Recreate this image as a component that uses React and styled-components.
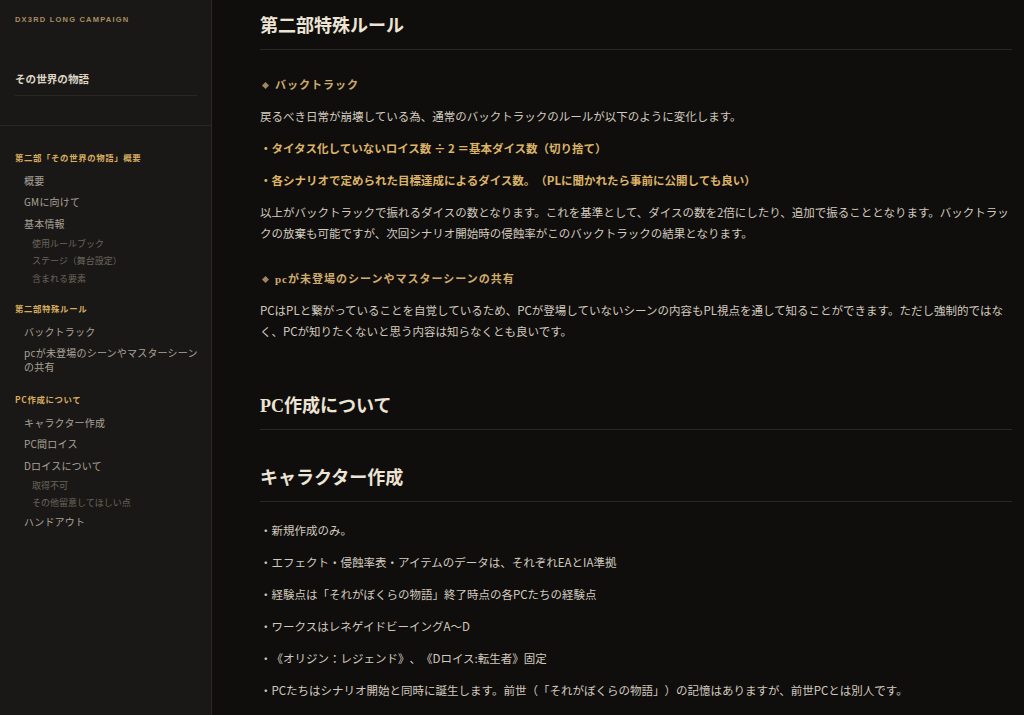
import React from 'react';
import styled, { createGlobalStyle } from 'styled-components';

const GlobalStyle = createGlobalStyle`
  html, body {
    margin: 0;
    padding: 0;
    background: #100e0d;
  }
  body {
    font-family: "Noto Sans CJK JP", "Noto Sans", sans-serif;
    text-spacing-trim: space-all;
  }
`;

const Page = styled.div`
  display: grid;
  grid-template-columns: 212px 1fr;
  height: 100vh;
  overflow: hidden;
  background: #100e0d;
`;

const Sidebar = styled.aside`
  background: #1a1816;
  border-right: 1px solid #2b2825;
  overflow: hidden;
`;

const SideHeader = styled.div`
  padding: 14px 14px 29px 15px;
  border-bottom: 1px solid #2a2724;
`;

const Campaign = styled.div`
  font-family: "Liberation Sans", Arial, sans-serif;
  font-size: 7.5px;
  line-height: 12px;
  letter-spacing: 1.2px;
  font-weight: 700;
  color: #a88f64;
  text-transform: uppercase;
`;

const SideTitle = styled.div`
  margin-top: 46px;
  font-family: "Liberation Serif", "Noto Sans CJK JP", serif;
  font-size: 10.6px;
  line-height: 16px;
  font-weight: 700;
  color: #ddd5c6;
  padding-bottom: 7px;
  border-bottom: 1px solid #2a2723;
`;

const Nav = styled.nav`
  padding: 24px 12px 0 15px;
`;

const NavGroup = styled.div`
  margin-bottom: 14px;
`;

const NavSection = styled.div`
  font-size: 8.4px;
  line-height: 14px;
  letter-spacing: 0.65px;
  font-weight: 700;
  color: #d6ad5e;
  margin-bottom: 6px;
`;

const NavItem = styled.div`
  font-size: ${p => (p.$sub ? '9px' : '10px')};
  letter-spacing: ${p => (p.$sub ? '0' : '0.2px')};
  line-height: ${p => (p.$sub ? '13px' : '14px')};
  padding: ${p => (p.$sub ? '2.25px 0 2.25px 17px' : '3.75px 0 3.75px 9px')};
  color: ${p => (p.$sub ? '#6b655d' : '#a9a298')};
`;

const Main = styled.main`
  padding: 13px 12px 0 48px;
  overflow: hidden;
  color: #d1cabf;
  font-size: 11.5px;
`;

const H2 = styled.h2`
  margin: ${p => p.$top || 0}px 0 0;
  font-family: "Liberation Serif", "Noto Sans CJK JP", serif;
  font-size: 18px;
  line-height: 26px;
  font-weight: 700;
  color: #ece4d4;
  padding-bottom: 10px;
  border-bottom: 1px solid #2a2724;
`;

const H3 = styled.h3`
  display: flex;
  align-items: center;
  gap: 5px;
  margin: 25px 0 11px;
  font-family: "Liberation Serif", "Noto Sans CJK JP", serif;
  font-size: 11px;
  line-height: 20px;
  letter-spacing: 1px;
  font-weight: 700;
  color: #cfab6c;
`;

const Diamond = styled.span`
  width: 5px;
  height: 5px;
  margin-left: 3px;
  margin-right: 2px;
  background: #a08660;
  transform: rotate(45deg);
`;

const P = styled.p`
  margin: 0 0 11px;
  line-height: 21px;
  font-weight: ${p => (p.$strong ? 700 : 400)};
  color: ${p => (p.$strong ? '#dcb468' : '#d1cabf')};
`;

const List = styled.div`
  margin-top: 18px;
`;

const navGroups = [
  {
    title: '第二部「その世界の物語」概要',
    items: [
      ['概要'],
      ['GMに向けて'],
      ['基本情報', ['使用ルールブック', 'ステージ（舞台設定）', '含まれる要素']],
    ],
  },
  {
    title: '第二部特殊ルール',
    items: [['バックトラック'], ['pcが未登場のシーンやマスターシーンの共有']],
  },
  {
    title: 'PC作成について',
    items: [
      ['キャラクター作成'],
      ['PC間ロイス'],
      ['Dロイスについて', ['取得不可', 'その他留意してほしい点']],
      ['ハンドアウト'],
    ],
  },
];

const creation = [
  '・新規作成のみ。',
  '・エフェクト・侵蝕率表・アイテムのデータは、それぞれEAとIA準拠',
  '・経験点は「それがぼくらの物語」終了時点の各PCたちの経験点',
  '・ワークスはレネゲイドビーイングA〜D',
  '・《オリジン：レジェンド》、《Dロイス:転生者》固定',
  '・PCたちはシナリオ開始と同時に誕生します。前世（「それがぼくらの物語」）の記憶はありますが、前世PCとは別人です。',
];

const App = () => {
  return (
    <Page>
      <GlobalStyle />
      <Sidebar>
        <SideHeader>
          <Campaign>DX3rd Long Campaign</Campaign>
          <SideTitle>その世界の物語</SideTitle>
        </SideHeader>
        <Nav>
          {navGroups.map(g => (
            <NavGroup key={g.title}>
              <NavSection>{g.title}</NavSection>
              {g.items.map(([label, subs]) => (
                <React.Fragment key={label}>
                  <NavItem>{label}</NavItem>
                  {subs && subs.map(s => <NavItem $sub key={s}>{s}</NavItem>)}
                </React.Fragment>
              ))}
            </NavGroup>
          ))}
        </Nav>
      </Sidebar>

      <Main>
        <H2>第二部特殊ルール</H2>
        <H3><Diamond />バックトラック</H3>
        <P>戻るべき日常が崩壊している為、通常のバックトラックのルールが以下のように変化します。</P>
        <P $strong>・タイタス化していないロイス数 ÷ 2 ＝基本ダイス数（切り捨て）</P>
        <P $strong>・各シナリオで定められた目標達成によるダイス数。（PLに聞かれたら事前に公開しても良い）</P>
        <P>以上がバックトラックで振れるダイスの数となります。これを基準として、ダイスの数を2倍にしたり、追加で振ることとなります。バックトラックの放棄も可能ですが、次回シナリオ開始時の侵蝕率がこのバックトラックの結果となります。</P>
        <H3><Diamond />pcが未登場のシーンやマスターシーンの共有</H3>
        <P>PCはPLと繋がっていることを自覚しているため、PCが登場していないシーンの内容もPL視点を通して知ることができます。ただし強制的ではなく、PCが知りたくないと思う内容は知らなくとも良いです。</P>

        <H2 $top={51}>PC作成について</H2>
        <H2 $top={35}>キャラクター作成</H2>
        <List>
          {creation.map(t => <P key={t}>{t}</P>)}
        </List>
      </Main>
    </Page>
  );
};

export default App;
